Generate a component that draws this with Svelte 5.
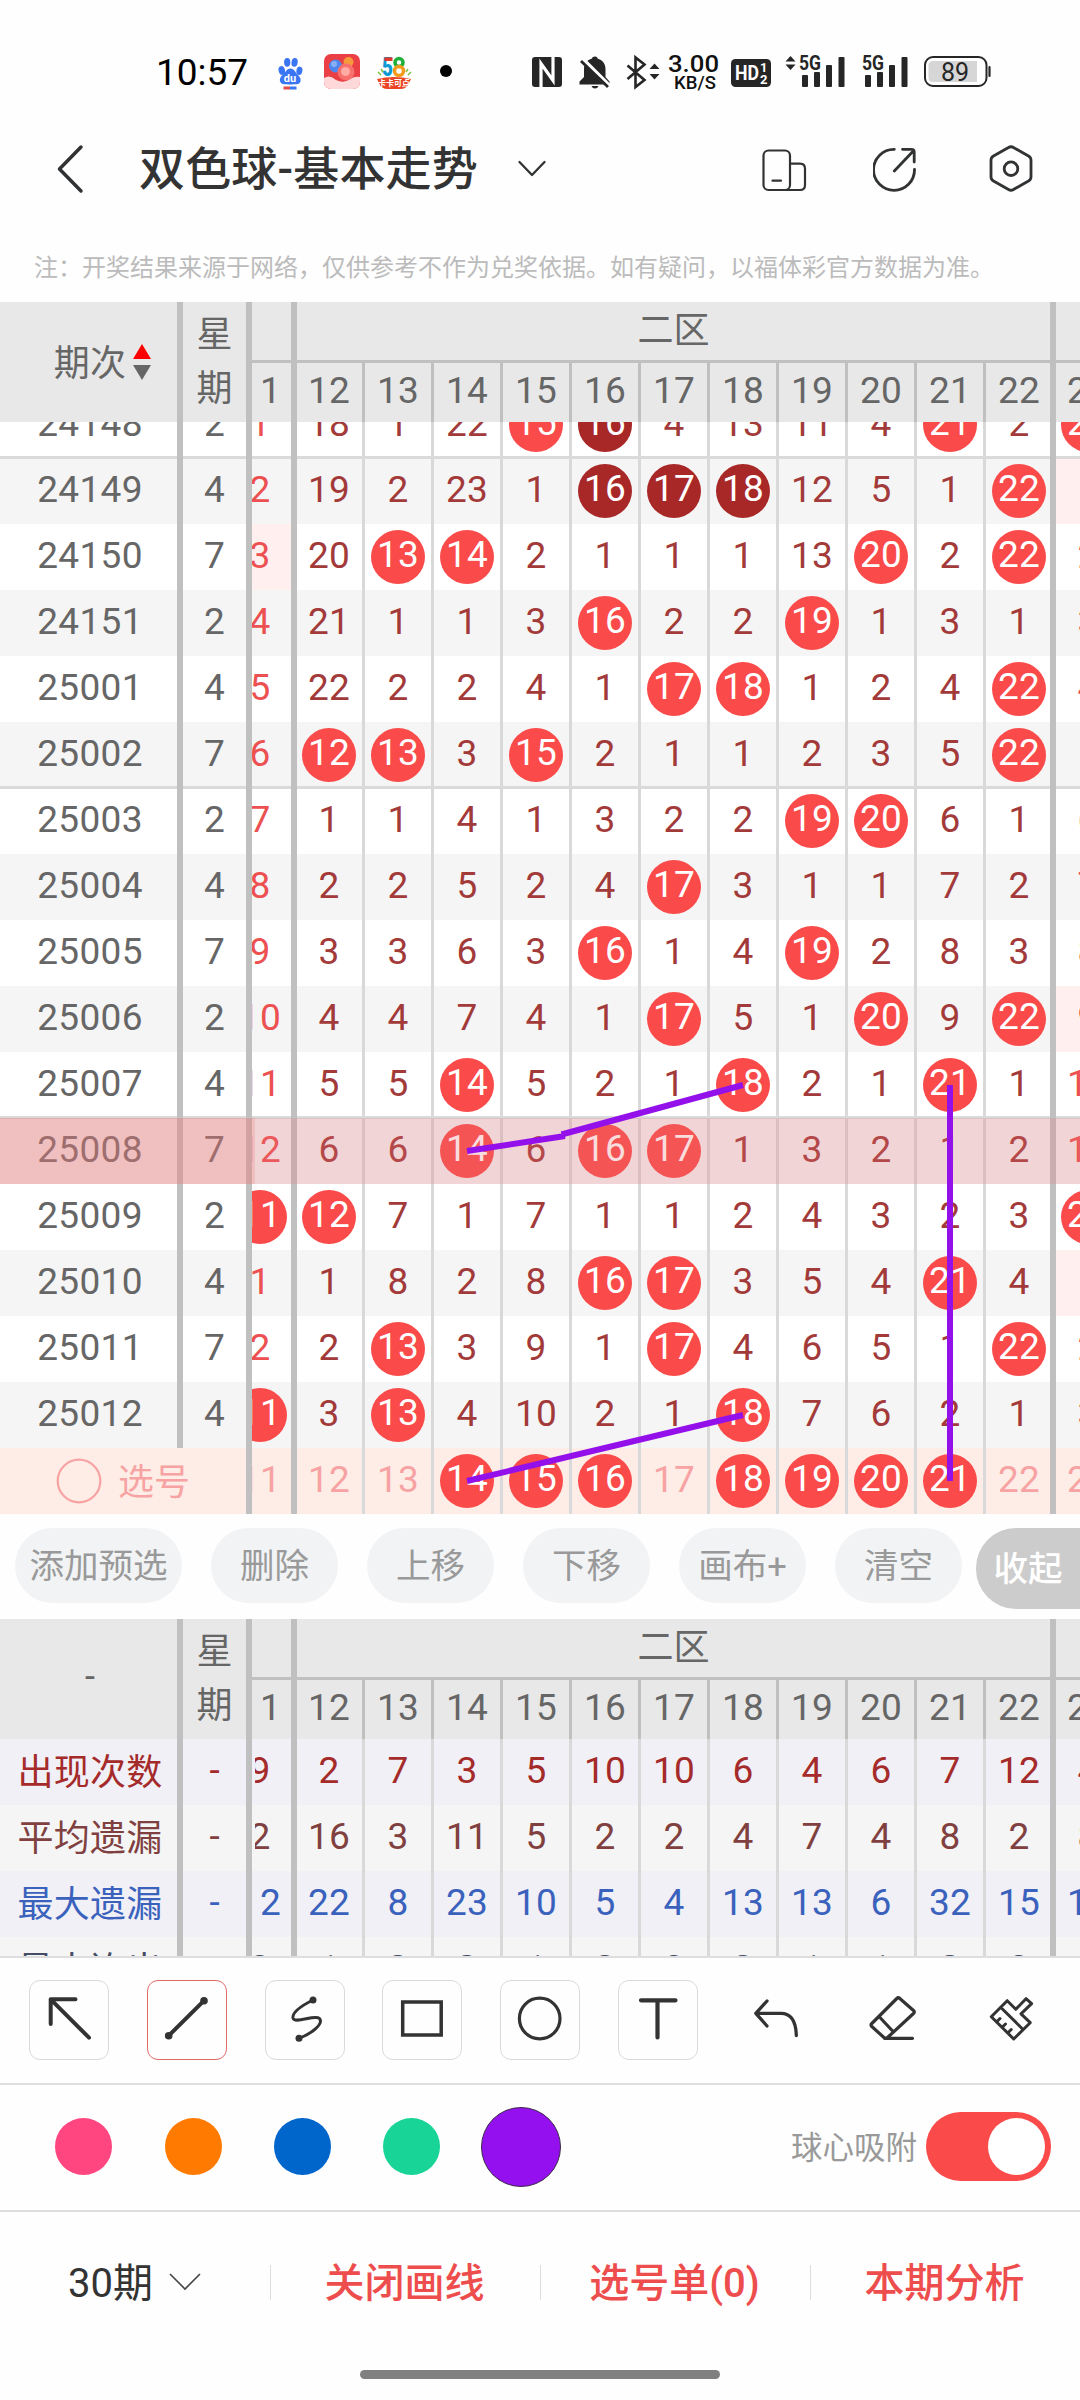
<script>
  const columns = [11, 12, 13, 14, 15, 16, 17, 18, 19, 20, 21, 22, 23];

  // '*' drawn ball, '!' repeated ball, '~' tinted cell
  const draws = [
    { issue: '24148', week: 2, cells: '1 18 1 22 15* 16! 4 13 11 4 21* 2 23*' },
    { issue: '24149', week: 4, cells: '2 19 2 23 1 16! 17! 18! 12 5 1 22* 1~' },
    { issue: '24150', week: 7, cells: '3~ 20 13* 14* 2 1 1 1 13 20* 2 22* 2' },
    { issue: '24151', week: 2, cells: '4 21 1 1 3 16* 2 2 19* 1 3 1 3' },
    { issue: '25001', week: 4, cells: '5 22 2 2 4 1 17* 18* 1 2 4 22* 4' },
    { issue: '25002', week: 7, cells: '6 12* 13* 3 15* 2 1 1 2 3 5 22* 5' },
    { issue: '25003', week: 2, cells: '7 1 1 4 1 3 2 2 19* 20* 6 1 6' },
    { issue: '25004', week: 4, cells: '8 2 2 5 2 4 17* 3 1 1 7 2 7' },
    { issue: '25005', week: 7, cells: '9 3 3 6 3 16* 1 4 19* 2 8 3 8' },
    { issue: '25006', week: 2, cells: '10 4 4 7 4 1 17* 5 1 20* 9 22* 9~' },
    { issue: '25007', week: 4, cells: '11 5 5 14* 5 2 1 18* 2 1 21* 1 10' },
    { issue: '25008', week: 7, cells: '12 6 6 14* 6 16* 17* 1 3 2 1 2 11' },
    { issue: '25009', week: 2, cells: '11* 12* 7 1 7 1 1 2 4 3 2 3 23*' },
    { issue: '25010', week: 4, cells: '1 1 8 2 8 16* 17* 3 5 4 21* 4 1~' },
    { issue: '25011', week: 7, cells: '2 2 13* 3 9 1 17* 4 6 5 1 22* 2' },
    { issue: '25012', week: 4, cells: '11* 3 13* 4 10 2 1 18* 7 6 2 1 3' }
  ];

  const stats = [
    { label: '出现次数', color: '#a52a2a', cells: '9 2 7 3 5 10 10 6 4 6 7 12 4' },
    { label: '平均遗漏', color: '#804040', cells: '2 16 3 11 5 2 2 4 7 4 8 2 8' },
    { label: '最大遗漏', color: '#3a62bd', cells: '12 22 8 23 10 5 4 13 13 6 32 15 10' },
    { label: '最大连出', color: '#454c66', cells: '3 1 2 2 1 2 3 2 1 1 2 3 1' }
  ];

  const actions = ['添加预选', '删除', '上移', '下移', '画布+', '清空'];
  const tools = ['arrow', 'line', 'curve', 'rect', 'circle', 'text', 'undo', 'eraser', 'clear'];
  const colors = ['#ff4680', '#ff7a00', '#0066cc', '#18d496', '#9410ee'];

  let highlighted = $state('25008');
  let picked = $state([14, 15, 16, 18, 19, 20, 21]);
  let tool = $state('line');
  let color = $state('#9410ee');
  let snap = $state(true);

  function parse(cells) {
    return cells.split(' ').map((c) => ({
      value: parseInt(c),
      ball: c.endsWith('*') || c.endsWith('!'),
      dark: c.endsWith('!'),
      tint: c.endsWith('~')
    }));
  }

  function togglePick(n) {
    picked = picked.includes(n) ? picked.filter((p) => p !== n) : [...picked, n];
  }
</script>

{#snippet tableHead(label, sortable)}
  <div class="thead">
    <div class="issue">
      <span>{label}</span>
      {#if sortable}
        <svg class="sort" width="18" height="36" viewBox="0 0 18 36">
          <path d="M9 0L18 15H0z" fill="#f00" />
          <path d="M0 21H18L9 36z" fill="#666" />
        </svg>
      {/if}
    </div>
    <div class="week"><span>星</span><span>期</span></div>
    <div class="pane">
      <div class="zones">
        <div class="zone first"></div>
        <div class="zone second">二区</div>
        <div class="zone"></div>
      </div>
      <div class="nums">
        {#each columns as n}
          <div class="cell" class:edge={n === 11 || n === 22}><span>{n}</span></div>
        {/each}
      </div>
    </div>
  </div>
{/snippet}

<div class="app">
  <div class="status">
    <svg width="320" height="64" viewBox="150 40 320 64">
      <text x="156" y="85" font-size="37" textLength="92" fill="#000">10:57</text>
      <g fill="#3a76f3">
        <ellipse cx="281.8" cy="70.5" rx="3.2" ry="4.4" transform="rotate(-14 281.8 70.5)" />
        <ellipse cx="287.2" cy="62.3" rx="3.1" ry="4.4" />
        <ellipse cx="294.6" cy="62.4" rx="3.1" ry="4.4" transform="rotate(8 294.6 62.4)" />
        <ellipse cx="299.4" cy="70.8" rx="3" ry="4.2" transform="rotate(10 299.4 70.8)" />
        <path d="M290.5 68.5c4 0 4.500 4 7.500 6.500 4 3.500 3.500 9-1.500 9.300-3 .2-9.500 .2-12 0-5.500-.4-6-6-2-9.300 3.500-2.600 4-6.500 8-6.500z" />
        <rect x="290" y="86.500" width="6.500" height="3" />
      </g>
      <rect x="283.500" y="86.500" width="6.500" height="3" fill="#e54a4a" />
      <text x="290" y="81.500" font-size="11" font-weight="700" text-anchor="middle" fill="#fff">du</text>

      <clipPath id="lotto"><rect x="324" y="54" width="36" height="35" rx="7" /></clipPath>
      <g clip-path="url(#lotto)">
        <rect x="324" y="54" width="36" height="35" fill="#e93f45" />
        <path d="M324 78q6-4 12 2 8 4 14-1 5-3 10-2v13h-36z" fill="#ffd9da" />
        <circle cx="348.500" cy="62" r="5" fill="#f79a3c" />
        <circle cx="335.500" cy="66" r="6.500" fill="#4f86ee" />
        <circle cx="334" cy="64" r="3" fill="#88aef8" />
        <circle cx="346" cy="72" r="8.500" fill="#f8706c" />
        <circle cx="345.500" cy="71.500" r="4.500" fill="#ffaaa2" />
      </g>

      <text x="382" y="76" font-size="26" font-weight="900" fill="#0c9ad6" textLength="11" lengthAdjust="spacingAndGlyphs">5</text>
      <path d="M384.500 59.200h8" stroke="#e5342a" stroke-width="3.500" />
      <circle cx="399" cy="62.500" r="4" fill="none" stroke="#1faf3c" stroke-width="3.500" />
      <circle cx="399" cy="71" r="4.500" fill="none" stroke="#f59a1b" stroke-width="3.500" />
      <path d="M378 72l3 3M381 69l2 3M411 72l-3 3M408 69l-2 3" stroke="#7cc242" stroke-width="1.500" />
      <path d="M377 79q17-4 34 0l-2 4q-2 6-9 6h-12q-7 0-9-6z" fill="#ea4425" />
      <text x="394" y="85.500" font-size="8" font-weight="700" text-anchor="middle" fill="#fff">卡卡可点</text>
      <circle cx="446" cy="71" r="6" fill="#000" />
    </svg>

    <svg width="480" height="64" viewBox="520 40 480 64">
      <rect x="532" y="57" width="30" height="30" rx="3" fill="#262626" />
      <path d="M541 87V63.500l12 17V57M541 64v17.500M553 80V62" fill="none" stroke="#fff" stroke-width="3.200" />

      <g fill="#262626">
        <path d="M595 56.500c2 0 2.500 1 2.500 2 5 1.500 8 5 8 10.500v8l4 4.500v3h-30v-3l4.500-4.500v-8c0-5.500 3-9 8-10.500 0-1 1-2 3-2z" />
        <path d="M591.500 86h7q-1 2.500-3.500 2.500t-3.500-2.500z" />
      </g>
      <path d="M580.500 57.500l30 30" stroke="#fff" stroke-width="5" />
      <path d="M581 61l27 26" stroke="#262626" stroke-width="2.800" />

      <path d="M627.500 65.500l17 14.500-9 7V57.500l9 7-17 14.500" fill="none" stroke="#262626" stroke-width="2.600" />
      <path d="M654.500 63.500l5 5.500h-10zM654.500 79.500l5-5.500h-10z" fill="#262626" />

      <text x="668" y="72" font-size="24" font-weight="500" textLength="51" lengthAdjust="spacingAndGlyphs" fill="#111">3.00</text>
      <text x="674" y="89" font-size="18.500" font-weight="500" textLength="42" fill="#111">KB/S</text>

      <rect x="731" y="59" width="40" height="28" rx="4.500" fill="#262626" />
      <text x="735" y="80" font-size="20" font-weight="700" textLength="24" lengthAdjust="spacingAndGlyphs" fill="#fff">HD</text>
      <text x="760" y="72" font-size="13" font-weight="700" fill="#fff">1</text>
      <text x="760" y="84" font-size="13" font-weight="700" fill="#fff">2</text>

      <path d="M790.500 56l5 5.500h-10zM790.500 70l5-5.500h-10z" fill="#262626" />
      {#each [799, 862] as x}
        <text {x} y="70" font-size="20" font-weight="700" textLength="22" lengthAdjust="spacingAndGlyphs" fill="#262626">5G</text>
        <g fill="#262626">
          <rect x={x + 3} y="75" width="6" height="12" rx="1" />
          <rect x={x + 15} y="72" width="6" height="15" rx="1" />
          <rect x={x + 27} y="65" width="6" height="22" rx="1" />
          <rect x={x + 39.500} y="57" width="6" height="30" rx="1" />
        </g>
      {/each}

      <rect x="925" y="57" width="61.500" height="29" rx="8" fill="#fff" stroke="#262626" stroke-width="2" />
      <path d="M933 61h44v21h-44q-4.500 0-4.500-4.500v-12q0-4.500 4.500-4.500z" fill="#d6d6d6" />
      <path d="M989.500 67v9" stroke="#262626" stroke-width="2.200" stroke-linecap="round" />
      <text x="955" y="80.500" font-size="25" text-anchor="middle" fill="#262626">89</text>
    </svg>
  </div>

  <header class="navbar">
    <svg class="back" width="30" height="50" viewBox="0 0 30 50"><path d="M26 3L4.500 25L26 47" /></svg>
    <h1>双色球-基本走势</h1>
    <svg class="caret" width="30" height="20" viewBox="0 0 30 20"><path d="M2.500 3L15 16L27.500 3" /></svg>
    <div class="nav-icons">
      <svg width="50" height="50" viewBox="760 144 50 50" stroke-width="2.200">
        <rect x="763.500" y="150.500" width="26.500" height="39.500" rx="5" />
        <path d="M790 163.700h10q5 0 5 5V185q0 5-5 5h-14M772.500 180.700h8.500" />
      </svg>
      <svg width="50" height="50" viewBox="873 144 50 50" stroke-width="2.800">
        <path d="M894.300 149.300a20.500 20.500 0 1 0 20.200 20M894.300 171l19-20M902.500 149.300h9q2.700 0 2.700 2.700v10" />
      </svg>
      <svg width="50" height="50" viewBox="986 144 50 50" stroke-width="2.800">
        <path d="M1008.500 147.500q2.500-1.500 5 0l15 8.500q2.500 1.500 2.500 4v17q0 2.500-2.500 4l-15 8.500q-2.500 1.500-5 0l-15-8.500q-2.500-1.500-2.500-4v-17q0-2.500 2.500-4z" />
        <circle cx="1011" cy="168.700" r="6.800" />
      </svg>
    </div>
  </header>

  <p class="notice">注：开奖结果来源于网络，仅供参考不作为兑奖依据。如有疑问，以福体彩官方数据为准。</p>

  <section class="trend">
    {@render tableHead('期次', true)}
    <div class="tbody">
      <div class="rows">
        {#each draws as draw, i}
          <div class="row" class:odd={i % 2 === 1} class:group={i % 5 === 1} class:active={draw.issue === highlighted}>
            <div class="issue"><span>{draw.issue}</span></div>
            <div class="week"><span>{draw.week}</span></div>
            <div class="pane">
              {#each parse(draw.cells) as cell, c}
                <div
                  class="cell"
                  class:edge={c === 0 || c === 11}
                  class:outer={c === 0 || c === 12}
                  class:tint={cell.tint}
                >
                  <span class:ball={cell.ball} class:dark={cell.dark}>{cell.value}</span>
                </div>
              {/each}
            </div>
          </div>
        {/each}
        <div class="row pick">
          <div class="label">
            <svg width="46" height="46" viewBox="0 0 46 46"><circle cx="23" cy="23" r="21.300" /></svg>
            <span>选号</span>
          </div>
          <div class="pane">
            {#each columns as n}
              <div class="cell" class:edge={n === 11 || n === 22} onclick={() => togglePick(n)} role="presentation">
                <span class:ball={picked.includes(n)}>{n}</span>
              </div>
            {/each}
          </div>
        </div>
      </div>
      <svg class="drawing" width="1080" height="1092" viewBox="0 422 1080 1092">
        <path d="M467 1151L565 1136M561.500 1134.500L743 1085M743 1415L467 1481M950 1085V1481" />
      </svg>
    </div>
  </section>

  <div class="actions">
    {#each actions as action}
      <button>{action}</button>
    {/each}
    <button class="collapse">收起</button>
  </div>

  <section class="stats">
    {@render tableHead('-', false)}
    {#each stats as stat, i}
      <div class="row" class:odd={i % 2 === 1} style="color: {stat.color}">
        <div class="issue"><span>{stat.label}</span></div>
        <div class="week"><span>-</span></div>
        <div class="pane">
          {#each parse(stat.cells) as cell, c}
            <div class="cell" class:edge={c === 0 || c === 11}><span>{cell.value}</span></div>
          {/each}
        </div>
      </div>
    {/each}
  </section>

  <div class="tools">
    {#each tools as name, i}
      <button class="tool" class:boxed={i < 6} class:selected={tool === name} onclick={() => (tool = name)} aria-label={name}>
        <svg width="80" height="80" viewBox="0 0 80 80">
          {#if name === 'arrow'}
            <path stroke-width="4" d="M46.500 19.300H21.700V44M21.700 19.300L60 57.700" />
          {:else if name === 'line'}
            <path stroke-width="4" d="M21.700 55.700L57 20.700" />
            <circle class="dot" cx="21.700" cy="55.700" r="3.800" />
            <circle class="dot" cx="57" cy="20.700" r="3.800" />
          {:else if name === 'curve'}
            <path stroke-width="3" d="M48 20C38 25 27 32 28 38C29.500 44.500 50 34 54.500 38.500C59 44 46 54 34 58.300" />
            <circle class="dot" cx="48" cy="20" r="3.500" />
            <circle class="dot" cx="34" cy="58.300" r="3.500" />
          {:else if name === 'rect'}
            <rect stroke-width="3.500" x="20.700" y="22" width="38.500" height="33" stroke-linejoin="miter" />
          {:else if name === 'circle'}
            <circle stroke-width="3.200" cx="39.700" cy="38.500" r="20.300" />
          {:else if name === 'text'}
            <path stroke-width="4.200" d="M23 20.300H57.500M39.500 20.300V57.500" />
          {:else if name === 'undo'}
            <path stroke-width="3.300" d="M31 21L19.800 33.300L31 46M20 33.300H45C56 33.300 60 42 60.300 55.500" />
          {:else if name === 'eraser'}
            <path stroke-width="3.200" d="M43.800 18.500Q45.300 17 46.800 18.500L60.500 30.500Q62 32 60.500 33.500L34 58H31.500L18.800 46.500Q17.300 45 18.800 43.500ZM26.500 37L40.500 52M31.500 58.300H59.500" />
          {:else}
            <path stroke-width="3" d="M36.200 20.700L44.800 29.300L55 18.700L60.600 23.700L50 33.800L59.200 42.700L42.700 59L20.300 36.700ZM29.600 27.300L51.300 48.700M25.500 42L29 38.500M31 47.500L34.500 44M36.700 53L40.200 49.500" />
          {/if}
        </svg>
      </button>
    {/each}
  </div>

  <div class="palette">
    {#each colors as c}
      <button class="swatch" onclick={() => (color = c)} aria-label={c}>
        <i class:current={c === color} style="background: {c}"></i>
      </button>
    {/each}
    <span class="snap-label">球心吸附</span>
    <button class="switch" class:on={snap} onclick={() => (snap = !snap)} aria-label="球心吸附"><i></i></button>
  </div>

  <nav class="footer">
    <div class="item period">
      <span>30期</span>
      <svg width="34" height="20" viewBox="0 0 34 20"><path d="M2 2L17 17L32 2" /></svg>
    </div>
    <div class="item"><span>关闭画线</span></div>
    <div class="item"><span>选号单(0)</span></div>
    <div class="item"><span>本期分析</span></div>
  </nav>
  <div class="home"></div>
</div>

<style>
  :global(body) {
    background: #fff;
  }

  .app {
    width: 1080px;
    height: 2400px;
    overflow: hidden;
    display: flex;
    flex-direction: column;
    background: #fefefe;
    font-family: Roboto, "Noto Sans CJK SC", sans-serif;
    color: #333;
  }

  button {
    padding: 0;
    border: none;
    background: none;
    font: inherit;
    color: inherit;
  }

  .status {
    height: 110px;
    flex: none;
    display: flex;
    justify-content: space-between;
    align-items: flex-start;
    box-sizing: border-box;
    padding: 40px 80px 0 150px;
  }

  .navbar {
    height: 118px;
    flex: none;
    display: flex;
    align-items: center;
    padding: 0 44px 0 55px;
  }

  .navbar svg {
    display: block;
    fill: none;
    stroke: #303233;
    stroke-linecap: round;
    stroke-linejoin: round;
  }

  .back path {
    stroke-width: 3.5;
  }

  .caret path {
    stroke-width: 2.3;
  }

  h1 {
    margin: 0 39px 0 54px;
    font-size: 46px;
    line-height: 60px;
    font-weight: 500;
    letter-spacing: 0.15px;
  }

  .nav-icons {
    margin-left: auto;
    display: flex;
    gap: 63px;
  }

  .notice {
    height: 74px;
    flex: none;
    margin: 0;
    padding-left: 34px;
    font-size: 24px;
    line-height: 80px;
    white-space: nowrap;
    color: #bbb;
  }

  .trend,
  .stats {
    flex: none;
    font-size: 37px;
    color: #666;
  }

  .thead {
    display: flex;
    height: 120px;
    background: #e8e8e8;
  }

  .issue,
  .week {
    display: flex;
    flex: none;
    align-items: center;
    justify-content: center;
    box-sizing: border-box;
    border-right: 6px solid #c0c0c0;
    position: relative;
    z-index: 2;
  }

  .issue {
    width: 183px;
    padding-left: 3px;
    letter-spacing: 0.3px;
  }

  .week {
    width: 69px;
  }

  .thead .issue,
  .thead .week {
    font-size: 36px;
  }

  .thead .issue span {
    padding-bottom: 4px;
  }

  .sort {
    margin-left: 7px;
    margin-right: -25px;
  }

  .thead .week {
    flex-direction: column;
    line-height: 54px;
  }

  .pane {
    flex: 1;
    display: flex;
    overflow: hidden;
  }

  .thead .pane {
    flex-direction: column;
  }

  .zones {
    display: flex;
    height: 58px;
    border-bottom: 3px solid #c0c0c0;
    line-height: 59px;
    font-size: 36px;
    text-align: center;
  }

  .zone.first {
    width: 39px;
    border-right: 6px solid #c0c0c0;
  }

  .zone.second {
    width: 753px;
    border-right: 6px solid #c0c0c0;
  }

  .nums {
    display: flex;
    height: 59px;
    margin-left: 3px;
    overflow: hidden;
  }

  .cell {
    flex: none;
    width: 66px;
    border-right: 3px solid #d9d9d9;
    display: flex;
    align-items: center;
    justify-content: center;
    position: relative;
    letter-spacing: 0.3px;
  }

  .cell:first-child {
    margin-left: -25px;
  }

  .nums .cell {
    border-color: #c0c0c0;
  }

  .cell.edge::after {
    content: '';
    position: absolute;
    top: 0;
    bottom: 0;
    right: -4px;
    width: 6px;
    background: #c0c0c0;
    z-index: 2;
  }

  .cell span,
  .row .week span {
    padding-bottom: 3px;
  }

  .nums .cell span,
  .row .issue span {
    padding-bottom: 4px;
  }

  .tbody {
    height: 1092px;
    overflow: hidden;
    position: relative;
  }

  .rows {
    margin-top: -30px;
  }

  .row {
    display: flex;
    height: 66px;
    position: relative;
    background: #fff;
  }

  .row.odd {
    background: #f5f5f5;
  }

  .row.group::before {
    content: '';
    position: absolute;
    top: -2px;
    left: 0;
    right: 0;
    height: 3px;
    background: #dadada;
    z-index: 1;
  }

  .trend .row .cell {
    color: #a33a3a;
  }

  .trend .row .cell.outer {
    color: #ec5050;
  }

  .trend .row .tint {
    background: #ffefef;
  }

  .trend .row .cell .ball {
    width: 54px;
    height: 54px;
    padding-bottom: 0;
    line-height: 50px;
    border-radius: 50%;
    background: #fa4a4a;
    color: #fff;
    text-align: center;
  }

  .trend .row .cell .ball.dark {
    background: #a82828;
  }

  .row.active::after {
    content: '';
    position: absolute;
    inset: 0;
    z-index: 3;
    background:
      linear-gradient(rgba(236, 128, 128, 0.24), rgba(236, 128, 128, 0.24)) 0 0 / 255px 100% no-repeat,
      rgba(233, 117, 119, 0.25);
  }

  .trend .row.pick {
    background: #feede6;
  }

  .trend .pick .cell,
  .pick .label {
    color: #f7a3a3;
  }

  .pick .label {
    width: 246px;
    flex: none;
    border-right: 6px solid #c0c0c0;
    display: flex;
    align-items: center;
    font-size: 36px;
  }

  .pick .label svg {
    margin: 0 16px 0 56px;
    fill: none;
    stroke: #f7a3a3;
    stroke-width: 2.2;
  }

  .pick .label span {
    padding-bottom: 5px;
  }

  .drawing {
    position: absolute;
    top: 0;
    left: 0;
    z-index: 4;
    fill: none;
    stroke: #9410ea;
    stroke-width: 6;
    pointer-events: none;
  }

  .actions {
    height: 105px;
    flex: none;
    box-sizing: border-box;
    display: flex;
    gap: 29px;
    padding: 14px 0 0 15px;
    overflow: hidden;
  }

  .actions button {
    flex: none;
    width: 127px;
    height: 75px;
    border-radius: 37.5px;
    background: #f1f3f5;
    color: #999;
    font-size: 34.5px;
    line-height: 72px;
    white-space: nowrap;
  }

  .actions button:first-child {
    width: 167px;
  }

  .actions .collapse {
    width: 104px;
    height: 81px;
    margin-left: -15px;
    border-radius: 40px 0 0 40px;
    background: #ccc;
    color: #fff;
    font-weight: 500;
    line-height: 78px;
  }

  .stats {
    height: 339px;
    overflow: hidden;
    box-sizing: border-box;
    border-bottom: 2px solid #dedede;
  }

  .stats .row {
    background: #f1f0f6;
  }

  .stats .row.odd {
    background: #f5f5f5;
  }

  .stats .row .issue {
    font-size: 36px;
  }

  .stats .row .issue span {
    padding-bottom: 6px;
  }

  .stats .row .pane {
    margin-left: 3px;
  }

  .nums .cell:first-child,
  .stats .row .cell:first-child {
    margin-left: -28px;
  }

  .tools {
    height: 127px;
    flex: none;
    box-sizing: border-box;
    display: flex;
    justify-content: space-between;
    padding: 22px 29px 0;
    border-bottom: 2px solid #dedede;
  }

  .tool {
    width: 80px;
    height: 80px;
    box-sizing: border-box;
    border: 1px solid transparent;
    border-radius: 11px;
  }

  .tool.boxed {
    border-color: #dadada;
  }

  .tool.selected {
    border-color: #e06a6a;
  }

  .tool svg {
    display: block;
    margin: -1px;
    fill: none;
    stroke: #333;
    stroke-linecap: round;
    stroke-linejoin: round;
  }

  .tool .dot {
    fill: #333;
    stroke: none;
  }

  .palette {
    height: 127px;
    flex: none;
    box-sizing: border-box;
    display: flex;
    align-items: center;
    padding: 0 29px 2px;
    border-bottom: 2px solid #dedede;
  }

  .swatch {
    width: 109.4px;
    display: flex;
    justify-content: center;
  }

  .swatch i {
    width: 57px;
    height: 57px;
    border-radius: 50%;
  }

  .swatch i.current {
    box-sizing: border-box;
    width: 80px;
    height: 80px;
    border: 1.5px solid #3a2a4a;
  }

  .snap-label {
    margin-left: auto;
    margin-right: 9px;
    padding-bottom: 4px;
    font-size: 31.5px;
    color: #999;
  }

  .switch {
    width: 125px;
    height: 69px;
    box-sizing: border-box;
    padding: 6px;
    border-radius: 35px;
    background: #ccc;
    display: flex;
  }

  .switch.on {
    background: #fa4a4a;
    justify-content: flex-end;
  }

  .switch i {
    width: 57px;
    height: 57px;
    border-radius: 50%;
    background: #fff;
  }

  .footer {
    height: 140px;
    flex: none;
    display: flex;
    align-items: center;
    font-size: 40px;
    font-weight: 500;
    color: #ee4d4d;
  }

  .item {
    width: 270px;
    height: 35px;
    box-sizing: border-box;
    display: flex;
    align-items: center;
    justify-content: center;
    white-space: nowrap;
    border-left: 1px solid #ddd;
    padding-right: 2px;
  }

  .item span {
    padding-bottom: 4px;
  }

  .item.period {
    border: none;
    padding: 0;
    font-weight: 400;
    color: #333;
  }

  .period svg {
    margin-left: 15px;
    fill: none;
    stroke: #444;
    stroke-width: 1.6;
  }

  .home {
    width: 360px;
    height: 9px;
    margin: 18px auto 0;
    border-radius: 5px;
    background: #808080;
  }
</style>
